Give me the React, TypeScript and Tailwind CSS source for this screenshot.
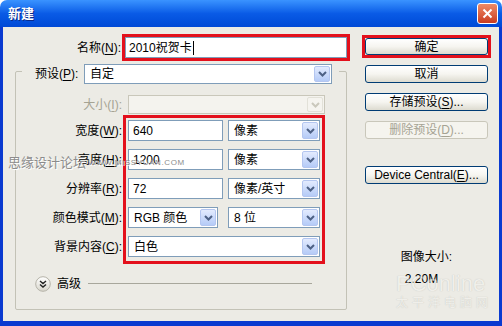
import React from 'react';

const font = "font-['Liberation_Sans','Noto_Sans_CJK_SC',sans-serif]";

const U = ({ children }: { children: React.ReactNode }) => (
  <span className="underline underline-offset-2">{children}</span>
);

function Arrow({ disabled }: { disabled?: boolean }) {
  return (
    <div
      className={
        disabled
          ? 'flex h-full w-[16px] items-center justify-center rounded-[2px] border border-[#E2E1D8] bg-[#F5F4EF]'
          : 'flex h-full w-[16px] items-center justify-center rounded-[2px] border border-[#B4C6F0] bg-gradient-to-b from-[#E3EBFE] to-[#B5CBF7]'
      }
    >
      <svg width="9" height="6" viewBox="0 0 9 6">
        <path
          d="M1 1 L4.5 4.5 L8 1"
          stroke={disabled ? '#CAC8BC' : '#4D6185'}
          strokeWidth="2"
          fill="none"
        />
      </svg>
    </div>
  );
}

function Select({
  text,
  className,
  disabled,
}: {
  text?: string;
  className: string;
  disabled?: boolean;
}) {
  return (
    <div
      className={`flex items-stretch border p-[1px] ${
        disabled ? 'border-[#C9C7BA] bg-[#F4F3EE]' : 'border-[#7F9DB9] bg-white'
      } ${className}`}
    >
      <div className="flex flex-1 items-center pl-[4px] text-[12px] text-black">{text}</div>
      <Arrow disabled={disabled} />
    </div>
  );
}

function Input({ text, className }: { text: string; className: string }) {
  return (
    <div className={`flex items-center border border-[#7F9DB9] bg-white pl-[4px] text-[12px] text-black ${className}`}>
      {text}
    </div>
  );
}

function Button({
  children,
  className = '',
  disabled,
}: {
  children: React.ReactNode;
  className?: string;
  disabled?: boolean;
}) {
  return (
    <div
      className={`flex items-center justify-center rounded-[3px] border text-[12px] ${
        disabled
          ? 'border-[#C9C7BA] bg-[#F5F4EE] text-[#A5A393]'
          : 'border-[#003C74] bg-gradient-to-b from-white via-[#F6F5F0] to-[#DDDBD0] text-black'
      } ${className}`}
    >
      {children}
    </div>
  );
}

const labelCls = 'flex h-[21px] items-center justify-end pr-[1px] text-[12px] text-black';

export default function App() {
  return (
    <div className={`relative flex h-[326px] w-[502px] flex-col ${font}`}>
      {/* title bar */}
      <div className="flex h-[27px] items-center justify-between rounded-t-[7px] bg-gradient-to-b from-[#3A93FF] via-[#0A5BE6] to-[#0049D6] pl-[8px] pr-[4px]">
        <span className="text-[13px] font-bold text-white [text-shadow:1px_1px_0_#0A2A8A]">新建</span>
        <div className="flex h-[21px] w-[21px] items-center justify-center rounded-[3px] border border-white bg-gradient-to-b from-[#EE8A66] to-[#C93A1E]">
          <svg width="11" height="11" viewBox="0 0 11 11">
            <path d="M1.5 1.5 L9.5 9.5 M9.5 1.5 L1.5 9.5" stroke="white" strokeWidth="2" />
          </svg>
        </div>
      </div>

      {/* body */}
      <div className="flex flex-1 border-x-[3px] border-b-[5px] border-[#0A3AD0] bg-[#ECEBE5]">
        {/* left column */}
        <div className="flex w-[352px] flex-col">
          <div className="mt-[7px] flex items-center">
            <div className="w-[119px] pr-[1px] text-right text-[12px] text-black">
              名称(<U>N</U>):
            </div>
            <div className="h-[27px] w-[228px] border-[3px] border-[#E3101C]">
              <div className="flex h-full items-center border border-[#7F9DB9] bg-white pl-[3px] text-[12px] text-black">
                2010祝贺卡
                <span className="ml-[1px] h-[14px] w-[1px] bg-black" />
              </div>
            </div>
          </div>

          {/* group box */}
          <div className="ml-[12px] mt-[10px] flex h-[239px] w-[332px] flex-col rounded-[2px] border border-[#C3C2B6]">
            <div className="-mt-[8px] ml-[6px] flex h-[20px] w-[317px] items-center bg-[#ECEBE5] pl-[13px]">
              <div className="w-[49px] text-[12px] text-black">
                预设(<U>P</U>):
              </div>
              <Select text="自定" className="h-[20px] w-[248px]" />
            </div>

            <div className="mt-[11px] flex h-[19px] items-center">
              <div className="w-[106px] text-right text-[12px] text-[#A5A393]">
                大小(<U>I</U>):
              </div>
              <Select disabled className="ml-[6px] h-[19px] w-[197px]" />
            </div>

            <div className="mt-[1px] flex">
              <div className="flex w-[107px] flex-col gap-[8px] pt-[5px]">
                <div className={labelCls}>
                  宽度(<U>W</U>):
                </div>
                <div className={labelCls}>
                  高度(<U>H</U>):
                </div>
                <div className={labelCls}>
                  分辨率(<U>R</U>):
                </div>
                <div className={labelCls}>
                  颜色模式(<U>M</U>):
                </div>
                <div className={labelCls}>
                  背景内容(<U>C</U>):
                </div>
              </div>
              <div className="flex w-[202px] flex-col gap-[8px] border-[3px] border-[#E3101C] px-[2px] pb-[4px] pt-[2px]">
                <div className="flex gap-[5px]">
                  <Input text="640" className="h-[21px] w-[95px]" />
                  <Select text="像素" className="h-[21px] w-[92px]" />
                </div>
                <div className="flex gap-[5px]">
                  <Input text="1200" className="h-[21px] w-[95px]" />
                  <Select text="像素" className="h-[21px] w-[92px]" />
                </div>
                <div className="flex gap-[5px]">
                  <Input text="72" className="h-[21px] w-[95px]" />
                  <Select text="像素/英寸" className="h-[21px] w-[92px]" />
                </div>
                <div className="flex gap-[10px]">
                  <Select text="RGB 颜色" className="h-[21px] w-[90px]" />
                  <Select text="8 位" className="h-[21px] w-[92px]" />
                </div>
                <Select text="白色" className="h-[21px] w-[192px]" />
              </div>
            </div>

            <div className="mt-[12px] flex h-[15px] items-center pl-[19px] pr-[34px]">
              <svg width="16" height="16" viewBox="0 0 16 16">
                <defs>
                  <linearGradient id="adv" x1="0" y1="0" x2="0" y2="1">
                    <stop offset="0" stopColor="#FFFFFF" />
                    <stop offset="1" stopColor="#D8D6CC" />
                  </linearGradient>
                </defs>
                <circle cx="8" cy="8" r="7.3" fill="url(#adv)" stroke="#B5B3A8" />
                <path d="M5 5 L8 7.5 L11 5 M5 8.5 L8 11 L11 8.5" stroke="#222" strokeWidth="1.4" fill="none" />
              </svg>
              <span className="ml-[6px] text-[12px] text-black">高级</span>
              <div className="ml-[7px] h-px flex-1 bg-[#A8A79C]" />
            </div>
          </div>
        </div>

        {/* right column */}
        <div className="flex flex-1 flex-col pl-[7px] pt-[8px]">
          <div className="h-[23px] w-[129px] border-[3px] border-[#E3101C]">
            <Button className="h-full w-full">确定</Button>
          </div>
          <Button className="ml-[3px] mt-[7px] h-[18px] w-[123px]">取消</Button>
          <Button className="ml-[3px] mt-[10px] h-[18px] w-[123px]">
            存储预设(<U>S</U>)...
          </Button>
          <Button disabled className="ml-[3px] mt-[10px] h-[18px] w-[123px]">
            删除预设(<U>D</U>)...
          </Button>
          <Button className="ml-[3px] mt-[27px] h-[18px] w-[123px]">
            Device Central(<U>E</U>)...
          </Button>
          <div className="ml-[3px] mt-[66px] w-[123px] text-center text-[12px] leading-[14px] text-black">图像大小:</div>
          <div className="ml-[3px] mt-[8px] w-[123px] pr-[10px] text-center text-[12px] leading-[14px] text-black">2.20M</div>
        </div>
      </div>

      {/* watermarks */}
      <div className="pointer-events-none absolute left-[8px] top-[153px] flex items-center">
        <span className="text-[13px] text-[#8C8C8C] [text-shadow:1px_1px_0_#FFFFFF]">思缘设计论坛</span>
        <span className="ml-[2px] text-[8px] tracking-[0.6px] text-[#8C8C8C] [text-shadow:1px_1px_0_#FFFFFF]">
          WWW.MISSYUAN.COM
        </span>
      </div>
      <div className="pointer-events-none absolute left-[396px] top-[272px] flex flex-col items-start opacity-50">
        <span className="text-[22px] leading-[24px] text-[#F4F4F0] [text-shadow:0_0_1px_#9A9A94]">
          PConline
        </span>
        <span className="text-[12px] leading-[15px] tracking-[4px] text-[#F4F4F0] [text-shadow:0_0_1px_#9A9A94]">
          太平洋电脑网
        </span>
      </div>
    </div>
  );
}
